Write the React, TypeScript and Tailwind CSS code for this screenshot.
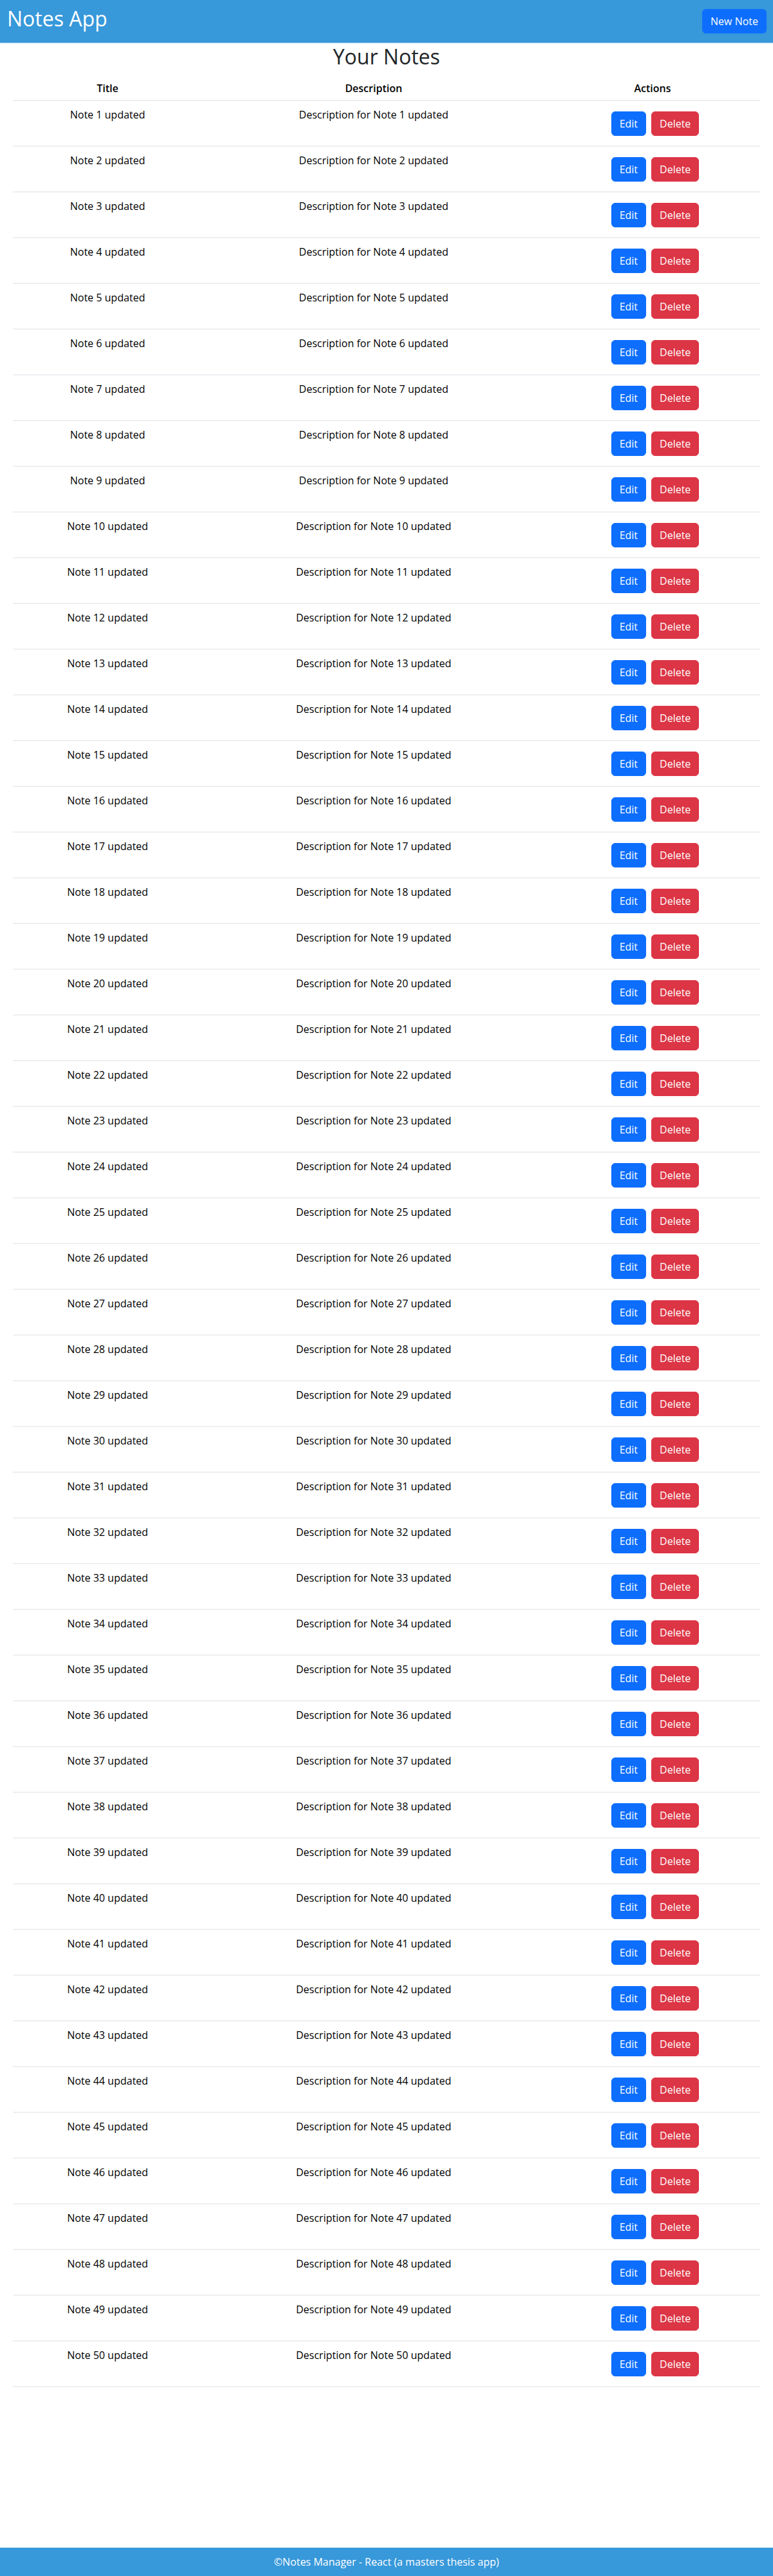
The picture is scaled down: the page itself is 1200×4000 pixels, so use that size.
import React from "react";

const notes = Array.from({ length: 50 }, (_, i) => ({
  id: i + 1,
  title: `Note ${i + 1} updated`,
  description: `Description for Note ${i + 1} updated`,
}));

export default function App() {
  return (
    <div
      className="min-h-screen flex flex-col bg-white text-[#212529]"
      style={{ fontFamily: '"Open Sans", "Noto Sans", sans-serif' }}
    >
      <header className="h-[67px] bg-[#3798da] border-b border-[#86c0ea] flex items-start justify-between px-[10px]">
        <div className="text-[32px] leading-[38px] mt-[10px] text-white pl-[1px]">Notes App</div>
        <button className="mt-[14px] h-[38px] px-[12px] border border-[#0d6efd] bg-[#0d6efd] text-white text-[16px] leading-[24px] rounded-[6px]">
          New Note
        </button>
      </header>

      <main className="flex-1 px-[20px]">
        <h2 className="text-center text-[32px] leading-[38px] mt-[2px] font-normal text-[#212529]">
          Your Notes
        </h2>
        <table className="w-[1160px] table-fixed border-collapse text-[16px] leading-[24px] text-black">
          <colgroup>
            <col className="w-[294px]" />
            <col className="w-[532px]" />
            <col className="w-[334px]" />
          </colgroup>
          <thead>
            <tr className="border-b-2 border-[#eeeff2]">
              <th className="font-semibold text-center pt-[18px] pb-[6px] px-2">Title</th>
              <th className="font-semibold text-center pt-[18px] pb-[6px] px-2">Description</th>
              <th className="font-semibold text-center pt-[18px] pb-[6px] px-2">Actions</th>
            </tr>
          </thead>
          <tbody>
            {notes.map((n) => (
              <tr key={n.id} className="border-b-2 border-[#eeeff2]">
                <td className="align-top text-center pt-[9px] px-2 h-[69px]">{n.title}</td>
                <td className="align-top text-center pt-[9px] px-2">{n.description}</td>
                <td className="align-top px-2 pt-[16px] pb-[15px]">
                  <div className="flex justify-center gap-[8px] pl-[8px]">
                    <button className="h-[38px] px-[12px] border border-[#0d6efd] bg-[#0d6efd] text-white text-[16px] leading-[24px] rounded-[6px]">
                      Edit
                    </button>
                    <button className="h-[38px] px-[12px] border border-[#dc3545] bg-[#dc3545] text-white text-[16px] leading-[24px] rounded-[6px]">
                      Delete
                    </button>
                  </div>
                </td>
              </tr>
            ))}
          </tbody>
        </table>
      </main>

      <footer className="h-[44px] bg-[#3798da] flex items-center justify-center text-white text-[16px] leading-[24px]">
        ©Notes Manager - React (a masters thesis app)
      </footer>
    </div>
  );
}
